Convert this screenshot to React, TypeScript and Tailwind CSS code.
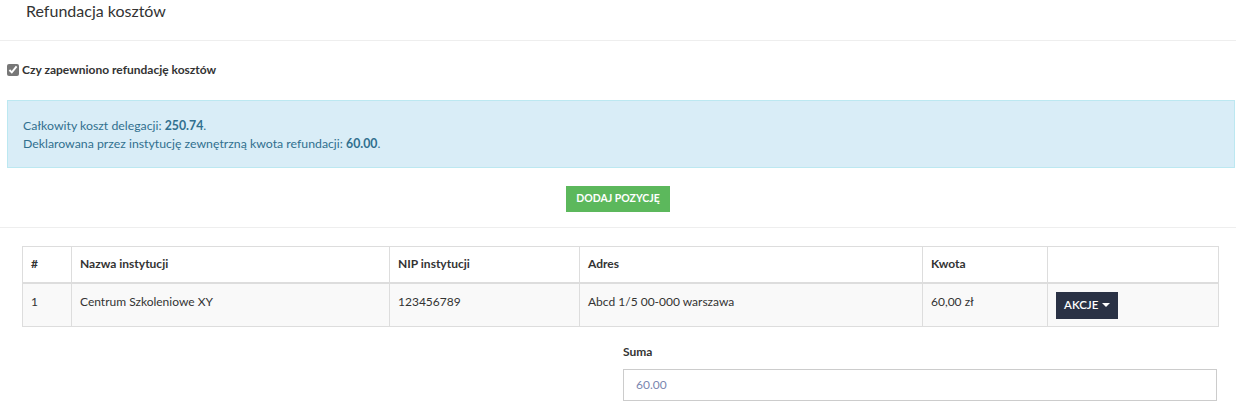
import React from "react";

const FONT = { fontFamily: "Lato, 'Noto Sans', sans-serif" };

function Caret() {
    return <span className="inline-block ml-1 align-middle border-x-[4px] border-x-transparent border-t-[4px] border-t-white" />;
}

export default function App() {
    const cols = [
        { label: "#", w: "w-[49px]" },
        { label: "Nazwa instytucji", w: "w-[318px]" },
        { label: "NIP instytucji", w: "w-[190px]" },
        { label: "Adres", w: "w-[343px]" },
        { label: "Kwota", w: "w-[125px]" },
        { label: "", w: "" },
    ];
    const row = ["1", "Centrum Szkoleniowe XY", "123456789", "Abcd 1/5 00-000 warszawa", "60,00 zł"];

    return (
        <div className="w-[1236px] h-[417px] bg-white text-[#333] text-[12px] overflow-hidden" style={FONT}>
            {/* Header */}
            <div className="h-[41px] border-b border-[#eee] px-[26px]">
                <h3 className="text-[16px] leading-[22px] text-[#333]">Refundacja kosztów</h3>
            </div>

            {/* Checkbox */}
            <div className="pl-[7px] pt-[21px] flex items-center gap-[3px]">
                <input type="checkbox" defaultChecked className="w-[12px] h-[12px] m-0 accent-[#777]" />
                <span className="font-bold text-[12px] leading-[16px]">Czy zapewniono refundację kosztów</span>
            </div>

            {/* Info */}
            <div className="ml-[7px] mr-[1px] mt-[22px] h-[68px] border border-[#bce8f1] bg-[#d9edf7] text-[#31708f] px-[15px] pt-[16px] text-[12.3px] leading-[18px]">
                <div>Całkowity koszt delegacji: <b>250.74</b>.</div>
                <div>Deklarowana przez instytucję zewnętrzną kwota refundacji: <b>60.00</b>.</div>
            </div>

            {/* Add button */}
            <div className="h-[60px] border-b border-[#eee] flex justify-center pt-[18px]">
                <button className="h-[26px] px-[10px] bg-[#5cb85c] text-white font-bold text-[10.5px] uppercase">
                    Dodaj pozycję
                </button>
            </div>

            {/* Table */}
            <div className="pl-[22px] pr-[17px] pt-[18px]">
                <table className="w-full border-collapse border border-[#ddd]">
                    <thead>
                        <tr className="h-[36px]">
                            {cols.map((c, i) => (
                                <th key={i} className={`${c.w} border border-[#ddd] border-b-2 text-left font-bold px-[8px] text-[12px]`}>
                                    {c.label}
                                </th>
                            ))}
                        </tr>
                    </thead>
                    <tbody>
                        <tr className="h-[44px] bg-[#f9f9f9]">
                            {row.map((v, i) => (
                                <td key={i} className="border border-[#ddd] px-[8px] align-top pt-[9px]">{v}</td>
                            ))}
                            <td className="border border-[#ddd] px-[8px] align-top pt-[8px]">
                                <button className="h-[27px] px-[8px] bg-[#2a3245] text-white text-[11.5px] font-semibold flex items-center">
                                    AKCJE<Caret />
                                </button>
                            </td>
                        </tr>
                    </tbody>
                </table>
            </div>

            {/* Suma */}
            <div className="flex justify-end pr-[19px] pt-[17px]">
                <div className="w-[594px]">
                    <label className="block font-bold text-[12px] leading-[16px] mb-[9px]">Suma</label>
                    <div className="h-[32px] border border-[#ccc] px-[12px] flex items-center text-[#7a86b0]">60.00</div>
                </div>
            </div>
        </div>
    );
}
